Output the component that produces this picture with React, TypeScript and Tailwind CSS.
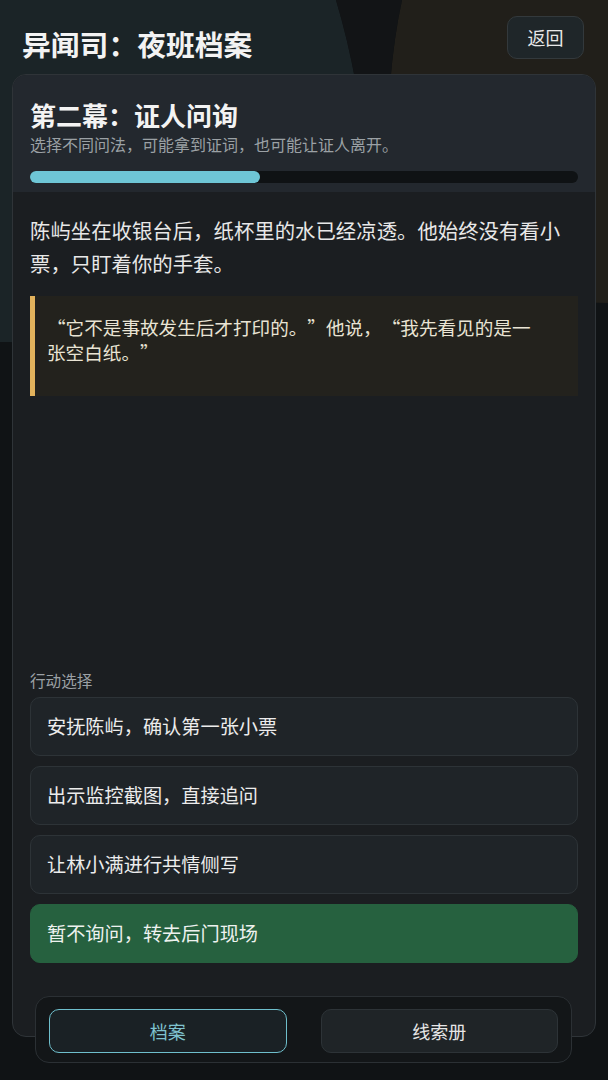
import React from "react";

const choices = [
  { text: "安抚陈屿，确认第一张小票", active: false },
  { text: "出示监控截图，直接追问", active: false },
  { text: "让林小满进行共情侧写", active: false },
  { text: "暂不询问，转去后门现场", active: true },
];

// full-width quotation marks, as the CJK layout in the screenshot sets them
function Lq() {
  return <span className="inline-block w-[1em] text-right">“</span>;
}
function Rq() {
  return <span className="inline-block w-[1em] text-left">”</span>;
}

function Backdrop() {
  return (
    <svg className="absolute inset-0 h-full w-full" viewBox="0 0 608 1080" preserveAspectRatio="none">
      <rect width="608" height="1080" fill="#101315" />
      <path d="M0 0 H336 Q348 40 356 84 L352 336 Q180 344 0 342 Z" fill="#1b2427" />
      <path d="M402 0 H608 V303 Q500 300 392 300 L390 84 Q394 36 402 0 Z" fill="#211f1a" />
      <path d="M336 0 H402 Q394 36 390 84 L356 84 Q348 40 336 0 Z" fill="#121416" />
    </svg>
  );
}

export default function App() {
  return (
    <div
      lang="zh-CN"
      className="relative h-[1080px] w-full overflow-hidden text-[#ececec]"
      style={{ fontFamily: '"Noto Sans CJK SC", "Noto Sans", sans-serif' }}
    >
      <Backdrop />

      <div className="relative flex flex-col">
        {/* top bar */}
        <div className="flex items-start justify-between pl-[22px] pr-[24px] pt-[16px]">
          <h1 className="mt-[14px] text-[28.8px] font-bold leading-none text-[#f3f3f3]">异闻司：夜班档案</h1>
          <button className="flex h-[43px] w-[77px] items-center justify-center rounded-[10px] border border-[#33393c] bg-[#1f2629] text-[18px] text-[#e8e8e8]">
            返回
          </button>
        </div>

        {/* main card */}
        <div className="mx-[12px] mt-[15px] flex h-[963px] flex-col overflow-hidden rounded-[14px] border border-[#2f3438] bg-[#1b1e21]">
          <div className="bg-[#23282e] px-[17px] pb-[9px] pt-[23px]">
            <h2 className="text-[26px] font-bold leading-[34px] text-[#f3f3f3]">第二幕：证人问询</h2>
            <p className="text-[16px] leading-[25px] text-[#9ba1a5]">选择不同问法，可能拿到证词，也可能让证人离开。</p>
            <div className="mt-[14px] h-[12px] w-full rounded-full bg-[#0f1214]">
              <div className="h-full w-[42%] rounded-full bg-[#6ec6d6]" />
            </div>
          </div>

          <div className="flex flex-1 flex-col px-[17px] pb-[73px] pt-[22px]">
            <p className="text-[20.4px] leading-[32.5px] text-[#e8e8e8]">
              陈屿坐在收银台后，纸杯里的水已经凉透。他始终没有看小票，只盯着你的手套。
            </p>

            <div className="mt-[17px] border-l-[5px] border-[#e2b25c] bg-[#23221d] pb-[32px] pl-[12px] pr-[40px] pt-[19px]">
              <p className="text-[18.6px] leading-[24.5px] text-[#e9e4d4]">
                <Lq />它不是事故发生后才打印的。<Rq />他说，<Lq />我先看见的是一张空白纸。<Rq />
              </p>
            </div>

            <div className="flex-1" />

            <div className="mb-[6px] text-[15.6px] leading-[22px] text-[#9ba1a5]">行动选择</div>
            <div className="flex flex-col gap-[10px]">
              {choices.map((c) => (
                <button
                  key={c.text}
                  className={
                    c.active
                      ? "flex h-[59px] items-center rounded-[10px] border border-[#26613f] bg-[#26613f] px-[16px] text-left text-[19.2px] text-[#eef2ef]"
                      : "flex h-[59px] items-center rounded-[10px] border border-[#2d3337] bg-[#1f2428] px-[16px] text-left text-[19.2px] text-[#ececec]"
                  }
                >
                  {c.text}
                </button>
              ))}
            </div>
          </div>
        </div>
      </div>

      {/* bottom nav */}
      <div className="absolute bottom-[17px] left-[35px] grid w-[537px] grid-cols-2 gap-[34px] rounded-[14px] border border-[#2b3034] bg-[#131618] px-[13px] pb-[9px] pt-[12px]">
        <button className="flex h-[44px] items-center justify-center rounded-[10px] border border-[#6fbfcc] bg-[#1a2125] text-[18px] text-[#7fc3cf]">
          档案
        </button>
        <button className="flex h-[44px] items-center justify-center rounded-[10px] border border-[#2d3337] bg-[#1f2427] text-[18px] text-[#e6e6e6]">
          线索册
        </button>
      </div>
    </div>
  );
}
